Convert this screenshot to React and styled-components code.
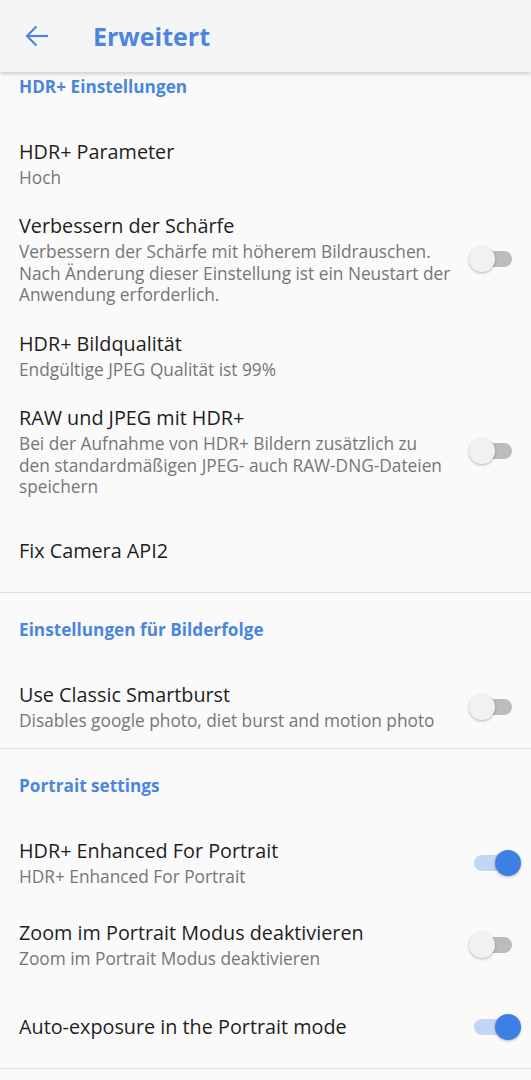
import React from "react";
import styled, { createGlobalStyle } from "styled-components";

const Global = createGlobalStyle`
  html, body { margin: 0; padding: 0; background: #fafafa; }
  body { font-family: "Open Sans", "Noto Sans", sans-serif; -webkit-font-smoothing: antialiased; }
  * { box-sizing: border-box; }
`;

const Page = styled.div`
  width: 531px;
  min-height: 1080px;
  background: #fafafa;
  overflow: hidden;
`;

const AppBar = styled.header`
  height: 72px;
  background: #f5f5f5;
  display: flex;
  align-items: center;
  box-shadow: 0 2px 4px rgba(0, 0, 0, 0.18);
  position: relative;
  z-index: 1;
`;

const BackButton = styled.div`
  width: 93px;
  display: flex;
  align-items: center;
  padding-left: 21px;
  color: #4a86e0;
`;

const Title = styled.h1`
  margin: 0;
  font-size: 25px;
  font-weight: 700;
  color: #4a86e0;
`;

const Category = styled.div`
  padding: ${(p) => (p.$compact ? "4px 19px 28px" : "26px 19px 25px")};
  font-size: 17.2px;
  line-height: 22px;
  font-weight: 700;
  color: #4a86dc;
`;

const Row = styled.div`
  display: flex;
  align-items: center;
  padding: 12.5px 0 12.5px 19px;
  min-height: ${(p) => (p.$tall ? "82px" : "0")};
`;

const TextCol = styled.div`
  flex: 1;
  min-width: 0;
`;

const ItemTitle = styled.div`
  font-size: 19.8px;
  line-height: 26px;
  color: #1e1e1e;
`;

const Summary = styled.div`
  margin-top: 2px;
  font-size: 17.3px;
  line-height: 21.5px;
  color: #767676;
  white-space: pre-line;
`;

const Widget = styled.div`
  width: 70px;
  flex: none;
  display: flex;
  justify-content: flex-end;
  padding-right: 19px;
`;

const Track = styled.div`
  position: relative;
  width: 38px;
  height: 16px;
  border-radius: 8px;
  background: ${(p) => (p.$on ? "#c3d6f6" : "#bcbcbc")};
`;

const Thumb = styled.div`
  position: absolute;
  top: -5px;
  left: ${(p) => (p.$on ? "21px" : "-5px")};
  width: 26px;
  height: 26px;
  border-radius: 50%;
  background: ${(p) => (p.$on ? "#3d7fe6" : "#f1f1f1")};
  box-shadow: 0 1px 3px rgba(0, 0, 0, 0.28);
`;

const Divider = styled.div`
  height: 1px;
  background: #dcdcdc;
`;

const Switch = ({ on }) => (
  <Widget>
    <Track $on={on}>
      <Thumb $on={on} />
    </Track>
  </Widget>
);

const Item = ({ title, summary, toggle, on, tall }) => (
  <Row $tall={tall}>
    <TextCol>
      <ItemTitle>{title}</ItemTitle>
      {summary && <Summary>{summary}</Summary>}
    </TextCol>
    {toggle && <Switch on={on} />}
  </Row>
);

export default function App() {
  return (
    <Page>
      <Global />
      <AppBar>
        <BackButton>
          <svg width="32" height="32" viewBox="0 0 24 24" fill="none" stroke="currentColor" strokeWidth="1.6" strokeLinecap="square">
            <path d="M19.5 12H5" />
            <path d="M11 5.5L4.5 12L11 18.5" />
          </svg>
        </BackButton>
        <Title>Erweitert</Title>
      </AppBar>

      <Category $compact>HDR+ Einstellungen</Category>
      <Item title="HDR+ Parameter" summary="Hoch" />
      <Item
        title="Verbessern der Schärfe"
        summary={"Verbessern der Schärfe mit höherem Bildrauschen.\nNach Änderung dieser Einstellung ist ein Neustart der\nAnwendung erforderlich."}
        toggle
        tall
      />
      <Item title="HDR+ Bildqualität" summary="Endgültige JPEG Qualität ist 99%" />
      <Item
        title="RAW und JPEG mit HDR+"
        summary={"Bei der Aufnahme von HDR+ Bildern zusätzlich zu\nden standardmäßigen JPEG- auch RAW-DNG-Dateien\nspeichern"}
        toggle
        tall
      />
      <Item title="Fix Camera API2" tall />
      <Divider />

      <Category>Einstellungen für Bilderfolge</Category>
      <Item title="Use Classic Smartburst" summary="Disables google photo, diet burst and motion photo" toggle tall />
      <Divider />

      <Category>Portrait settings</Category>
      <Item title="HDR+ Enhanced For Portrait" summary="HDR+ Enhanced For Portrait" toggle on tall />
      <Item title="Zoom im Portrait Modus deaktivieren" summary="Zoom im Portrait Modus deaktivieren" toggle tall />
      <Item title="Auto-exposure in the Portrait mode" toggle on tall />
      <Divider />
    </Page>
  );
}
